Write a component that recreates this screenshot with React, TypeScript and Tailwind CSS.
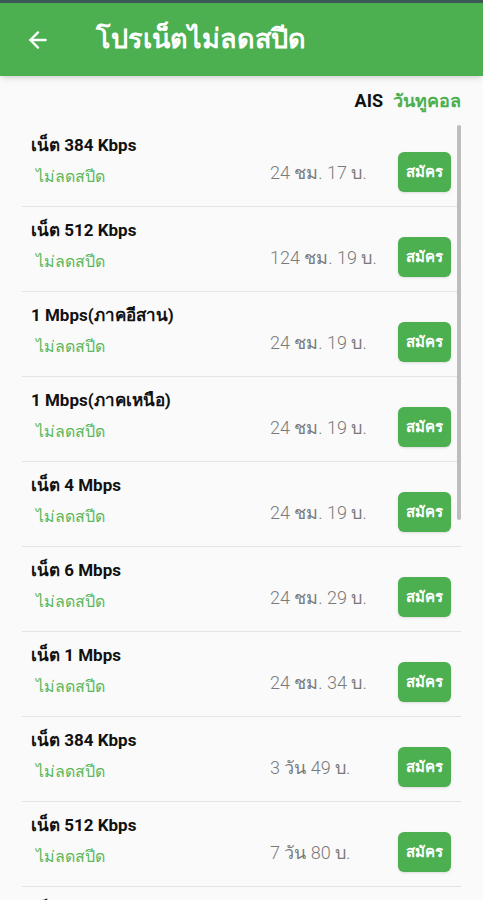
import { ArrowLeft } from "lucide-react";

const plans = [
  { name: "เน็ต 384 Kbps", price: "24 ชม. 17 บ." },
  { name: "เน็ต 512 Kbps", price: "124 ชม. 19 บ." },
  { name: "1 Mbps(ภาคอีสาน)", price: "24 ชม. 19 บ." },
  { name: "1 Mbps(ภาคเหนือ)", price: "24 ชม. 19 บ." },
  { name: "เน็ต 4 Mbps", price: "24 ชม. 19 บ." },
  { name: "เน็ต 6 Mbps", price: "24 ชม. 29 บ." },
  { name: "เน็ต 1 Mbps", price: "24 ชม. 34 บ." },
  { name: "เน็ต 384 Kbps", price: "3 วัน 49 บ." },
  { name: "เน็ต 512 Kbps", price: "7 วัน 80 บ." },
  { name: "เน็ต 1 Mbps", price: "7 วัน 99 บ." },
];

function PlanRow({ name, price }: { name: string; price: string }) {
  return (
    <div className="flex h-[85px] items-start border-b border-[#e4e4e4] pl-[9px] pr-[10px]">
      <div className="flex-1 pt-[11px]">
        <div className="text-[17px] font-bold leading-6 text-[#111]">{name}</div>
        <div className="mt-2 pl-[5px] text-[16px] leading-6 text-[#5cb85c]">ไม่ลดสปีด</div>
      </div>
      <div className="mt-[39px] w-[128px] text-[18px] font-light leading-6 text-[#7a7a7a]">{price}</div>
      <button className="mt-[30px] flex h-[40px] w-[53px] items-center justify-center rounded-[6px] bg-[#4caf50] text-[15px] font-bold text-white shadow-sm">
        สมัคร
      </button>
    </div>
  );
}

export default function App() {
  return (
    <div
      className="relative h-[900px] w-[483px] overflow-hidden bg-[#fafafa]"
      style={{ fontFamily: "Roboto, 'Noto Sans', 'DejaVu Sans', sans-serif" }}
    >
      <div className="h-[3px] bg-[#3b5a55]" />
      <div className="flex h-[73px] items-center bg-[#4caf50] shadow-md">
        <ArrowLeft className="ml-[25px] h-[26px] w-[26px] text-white" strokeWidth={2.2} />
        <h1 className="ml-[45px] text-[27px] font-bold text-white">โปรเน็ตไม่ลดสปีด</h1>
      </div>

      <div className="mx-[22px]">
        <div className="flex h-[46px] items-center justify-end gap-[10px] pt-[2px] text-[18px] font-bold">
          <span className="text-[#111]">AIS</span>
          <span className="text-[#4caf50]">วันทูคอล</span>
        </div>
        {plans.map((p, i) => (
          <PlanRow key={i} name={p.name} price={p.price} />
        ))}
      </div>

      <div className="absolute left-[457px] top-[125px] h-[395px] w-[4px] rounded-full bg-[#bdbdbd]" />
    </div>
  );
}
